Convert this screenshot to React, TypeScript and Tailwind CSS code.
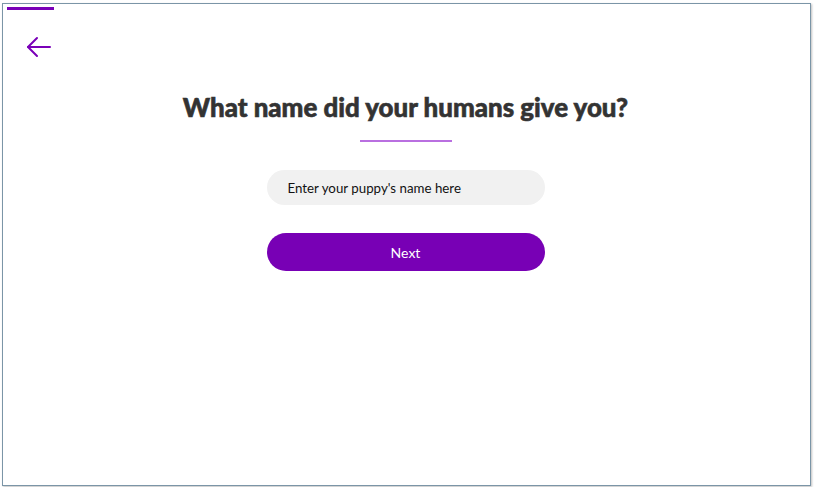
export default function App() {
  return (
    <div className="w-[814px] h-[487px] bg-white pt-[3px] pl-[2px]">
      <div className="w-[809px] h-[483px] border border-[#7b95a7] shadow-[1px_1px_2px_rgba(0,0,0,0.25)] bg-white flex flex-col">
        {/* progress bar */}
        <div className="ml-[4px] mt-[3px] w-[47px] h-[3px] bg-[#7a00b8]" />

        {/* back arrow */}
        <button className="ml-[23px] mt-[26px] w-[26px] h-[22px] text-[#7a00b8]">
          <svg width="26" height="22" viewBox="0 0 26 22" fill="none" stroke="currentColor" strokeWidth="2" strokeLinecap="round" strokeLinejoin="round">
            <path d="M24 11H2" />
            <path d="M11 2L2 11l9 9" />
          </svg>
        </button>

        <div className="flex flex-col items-center pr-[2px]">
          <h1 className="mt-[33px] text-[25.9px] leading-[32px] font-black text-[#333333] font-['Lato',sans-serif] [-webkit-text-stroke:0.6px_#333333]">
            What name did your humans give you?
          </h1>
          <div className="mt-[17px] w-[92px] h-[2px] bg-[#b96fe0]" />

          <input
            placeholder="Enter your puppy's name here"
            className="mt-[28px] w-[278px] h-[35px] rounded-full bg-[#f1f1f1] px-[21px] text-[13.3px] text-[#111] placeholder:text-[#111] font-['Lato',sans-serif] outline-none"
          />

          <button className="mt-[28px] w-[278px] h-[38px] rounded-full bg-[#7800b5] text-white text-[14px] font-['Lato',sans-serif]">
            Next
          </button>
        </div>
      </div>
    </div>
  );
}
